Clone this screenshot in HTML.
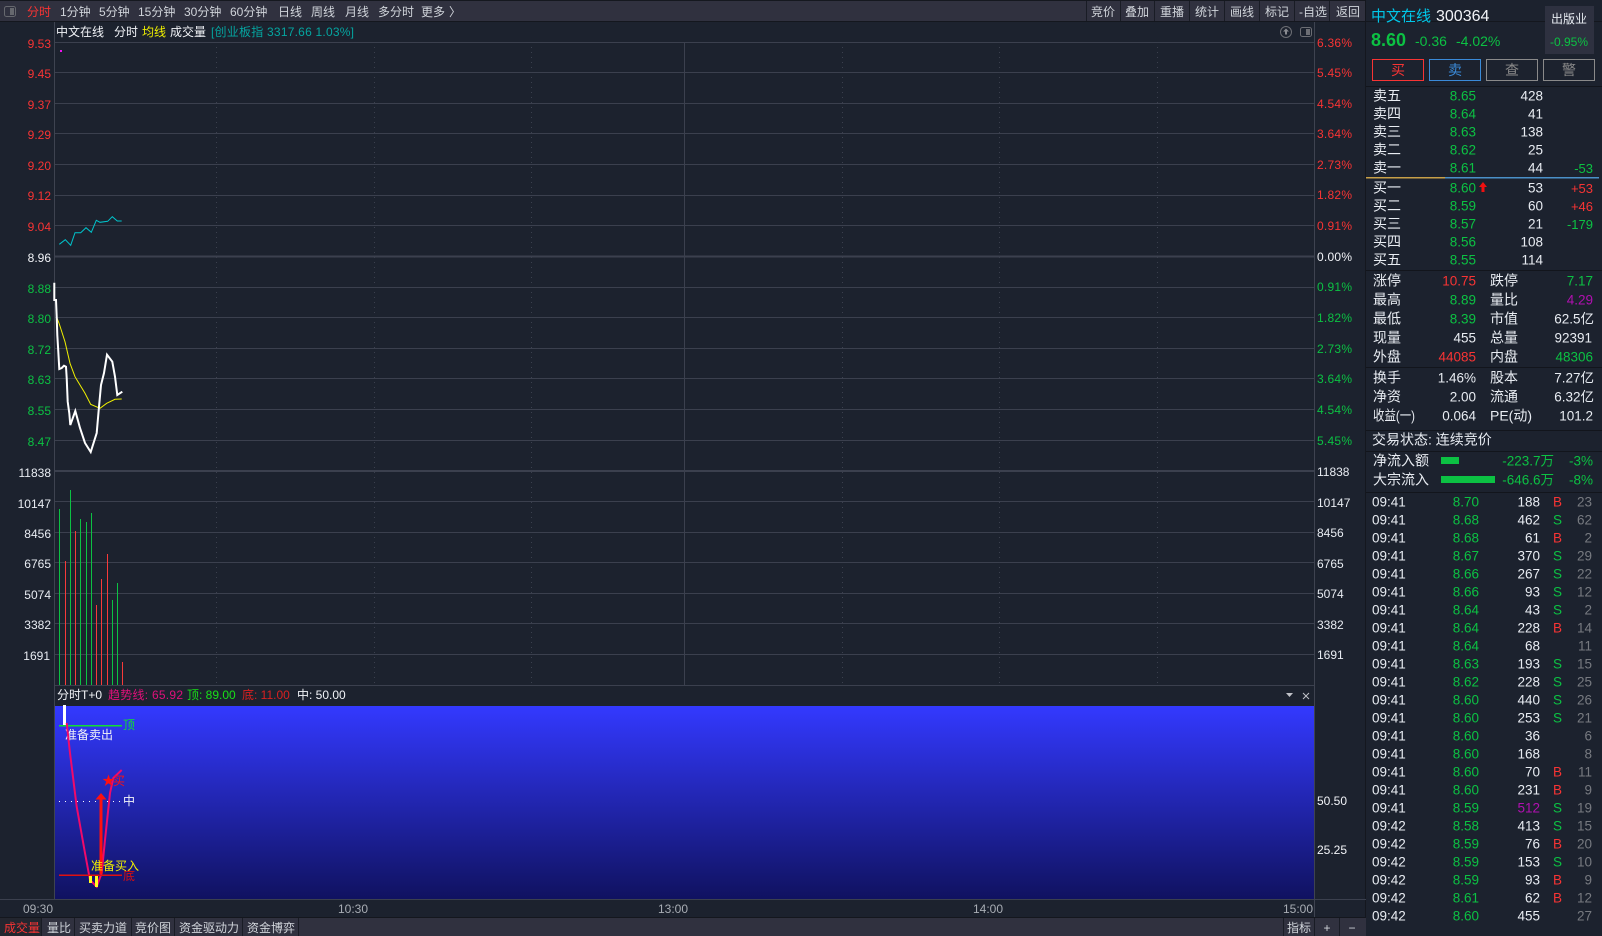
<!DOCTYPE html>
<html><head><meta charset="utf-8"><title>中文在线 300364</title>
<style>
html,body{margin:0;padding:0;background:#1c222e;width:1602px;height:936px;overflow:hidden}
svg{display:block}
text{font-family:"Liberation Sans","Noto Sans CJK SC",sans-serif;font-size:12px;fill:#e8ecf2}
.e{text-anchor:end}.m{text-anchor:middle}
.r{fill:#f83434}.g{fill:#0cc143}.w{fill:#f2f4f8}.y{fill:#f0f000}.p{fill:#b010b0}.d{fill:#777a80}.t{fill:#a8adb4}
.n text{font-size:13.5px}
.n text.l{font-size:14px}
.tb text{fill:#d0d4da}
.tb text.r{fill:#f83434}
.c{shape-rendering:crispEdges}
</style></head><body>
<svg width="1602" height="936" viewBox="0 0 1602 936" xmlns="http://www.w3.org/2000/svg">
<defs><linearGradient id="bl" x1="0" y1="0" x2="0" y2="1"><stop offset="0" stop-color="#3339ff"/><stop offset="1" stop-color="#101260"/></linearGradient></defs>
<rect width="1602" height="936" fill="#1c222e"/>

<!-- top toolbar -->
<g class="c">
<rect width="1366" height="22" fill="#30313f"/><rect y="0" width="1366" height="1" fill="#15181f"/><rect y="21" width="1602" height="1" fill="#14171e"/>
<rect x="1086" y="1" width="1" height="20" fill="#191c25"/><rect x="1120" y="1" width="1" height="20" fill="#191c25"/><rect x="1154" y="1" width="1" height="20" fill="#191c25"/><rect x="1189" y="1" width="1" height="20" fill="#191c25"/><rect x="1224" y="1" width="1" height="20" fill="#191c25"/><rect x="1259" y="1" width="1" height="20" fill="#191c25"/><rect x="1294" y="1" width="1" height="20" fill="#191c25"/><rect x="1329" y="1" width="1" height="20" fill="#191c25"/><rect x="1365" y="0" width="1" height="936" fill="#14171e"/>
</g>
<rect x="4.5" y="6.5" width="11" height="10" rx="2" fill="#30313f" stroke="#66686e"/><rect x="10" y="8" width="4" height="7" fill="#66686e"/>
<g class="tb">
<text x="27" y="16" class="r">分时</text><text x="60" y="16">1分钟</text><text x="99" y="16">5分钟</text><text x="138" y="16">15分钟</text><text x="184" y="16">30分钟</text><text x="230" y="16">60分钟</text><text x="278" y="16">日线</text><text x="311" y="16">周线</text><text x="345" y="16">月线</text><text x="378" y="16">多分时</text><text x="421" y="16">更多</text><text x="449" y="16">〉</text>
<text x="1091" y="16">竞价</text><text x="1125" y="16">叠加</text><text x="1160" y="16">重播</text><text x="1195" y="16">统计</text><text x="1230" y="16">画线</text><text x="1265" y="16">标记</text><text x="1299" y="16">-自选</text><text x="1336" y="16">返回</text>
</g>

<!-- chart legend -->
<text x="56" y="36" class="w">中文在线</text><text x="114" y="36" class="w">分时</text><text x="142" y="36" class="y">均线</text><text x="170" y="36" class="w">成交量</text><text x="211" y="36" style="fill:#05a5a0" textLength="143">[创业板指 3317.66 1.03%]</text>
<circle cx="1286" cy="32" r="5.5" fill="none" stroke="#6c6e74"/><path d="M1286 28.500l3 3h-2v3h-2v-3h-2z" fill="#8a8c92"/>
<rect x="1300.500" y="27.500" width="11" height="9" rx="2" fill="none" stroke="#6c6e74"/><rect x="1306" y="29" width="4" height="6" fill="#6c6e74"/>

<!-- grid -->
<g class="c" stroke="#3b404e" stroke-width="1">
<path d="M54 42.500H1314M54 72.500H1314M54 103.500H1314M54 133.500H1314M54 164.500H1314M54 195.500H1314M54 225.500H1314M54 287.500H1314M54 317.500H1314M54 348.500H1314M54 378.500H1314M54 409.500H1314M54 440.500H1314M54 501.500H1314M54 532.500H1314M54 562.500H1314M54 593.500H1314M54 623.500H1314M54 654.500H1314M54 685.500H1314M0 899.500H1366"/>
<path d="M54 256.500H1314M54 471H1314" stroke-width="2"/>
<path d="M216.500 42V685M374.500 42V685M531.500 42V685M842.500 42V685M999.500 42V685M1157.500 42V685" stroke-dasharray="1 4"/>
<path d="M684.500 42V685"/>
<path d="M54.500 22V899M1314.500 22V918" stroke="#3e4350"/>
</g>

<!-- left axis -->
<g class="e">
<text x="51" y="48" class="r">9.53</text><text x="51" y="78" class="r">9.45</text><text x="51" y="109" class="r">9.37</text><text x="51" y="139" class="r">9.29</text><text x="51" y="170" class="r">9.20</text><text x="51" y="200" class="r">9.12</text><text x="51" y="231" class="r">9.04</text><text x="51" y="262" class="w">8.96</text>
<text x="51" y="293" class="g">8.88</text><text x="51" y="323" class="g">8.80</text><text x="51" y="354" class="g">8.72</text><text x="51" y="384" class="g">8.63</text><text x="51" y="415" class="g">8.55</text><text x="51" y="446" class="g">8.47</text>
<text x="51" y="477">11838</text><text x="51" y="508">10147</text><text x="51" y="538">8456</text><text x="51" y="568">6765</text><text x="51" y="599">5074</text><text x="51" y="629">3382</text><text x="50" y="660">1691</text>
</g>
<!-- right axis -->
<text x="1317" y="47" class="r" textLength="35">6.36%</text><text x="1317" y="77" class="r" textLength="35">5.45%</text><text x="1317" y="108" class="r" textLength="35">4.54%</text><text x="1317" y="138" class="r" textLength="35">3.64%</text><text x="1317" y="169" class="r" textLength="35">2.73%</text><text x="1317" y="199" class="r" textLength="35">1.82%</text><text x="1317" y="230" class="r" textLength="35">0.91%</text><text x="1317" y="261" class="w" textLength="35">0.00%</text>
<text x="1317" y="291" class="g" textLength="35">0.91%</text><text x="1317" y="322" class="g" textLength="35">1.82%</text><text x="1317" y="353" class="g" textLength="35">2.73%</text><text x="1317" y="383" class="g" textLength="35">3.64%</text><text x="1317" y="414" class="g" textLength="35">4.54%</text><text x="1317" y="445" class="g" textLength="35">5.45%</text>
<text x="1317" y="476">11838</text><text x="1317" y="507">10147</text><text x="1317" y="537">8456</text><text x="1317" y="568">6765</text><text x="1317" y="598">5074</text><text x="1317" y="629">3382</text><text x="1317" y="659">1691</text>

<!-- price lines -->
<rect x="60" y="50" width="2" height="2" fill="#f010f0"/>
<polyline fill="none" stroke="#00c4cc" stroke-width="1" points="59.300,244.300 62.700,241.700 65.300,239.700 70.700,245.300 75,232.700 80.700,232.700 86,227.700 91.300,232.300 96.300,220.300 100,222.300 107.700,221.300 112.300,216.700 117.300,221 121.700,221"/>
<polyline fill="none" stroke="#f0f000" stroke-width="1" points="57,318 59.300,324 65,341.700 70,363.300 75,376.700 80,385 85,393.300 90.700,404.300 100,408.300 106.700,403.300 115,399.300 121.700,399"/>
<polyline fill="none" stroke="#ffffff" stroke-width="2" points="54.300,282.700 54.300,300 56,300 56.700,316.700 57.300,335 58.300,351.700 59.300,369 61.700,368 64,365.700 66,366.700 66.700,378 67.700,401.700 69.300,413.300 70.300,425 75.300,411 80,428 85,443 90.700,452 96.700,433 99,406.700 101,385 104,373 107,354.700 112.300,361.700 115,376.700 117.300,395 122.300,391.700"/>

<!-- volume -->
<g class="c" stroke-width="1">
<path stroke="#0cc143" d="M59.500 509V685M70.500 490V685M80.500 519V685M86.500 522V685M91.500 513V685M112.500 600V685M117.500 583V685"/>
<path stroke="#f83a3a" d="M65.500 561V685M75.500 531V685M96.500 605V685M101.500 579V685M107.500 554V685M122.500 662V685"/>
</g>

<!-- sub panel -->
<text x="57" y="699" class="w">分时T+0</text><text x="108" y="699" style="fill:#e0107a" textLength="75">趋势线: 65.92</text><text x="187" y="699" style="fill:#18e018">顶: 89.00</text><text x="242" y="699" style="fill:#d82020">底: 11.00</text><text x="297" y="699" class="w">中: 50.00</text>
<path d="M1286 693h7l-3.500 4z" fill="#c0c2c8"/><path d="M1303 693l6 6M1309 693l-6 6" stroke="#c0c2c8" stroke-width="1" fill="none"/>
<rect x="55" y="706" width="1259" height="193" fill="url(#bl)"/>
<rect x="63" y="705" width="3" height="21" fill="#fff"/>
<rect x="59" y="725" width="63" height="1.500" fill="#10e030"/>
<text x="123" y="729" style="fill:#10e030">顶</text>
<text x="65" y="739" class="w">准备卖出</text>
<polyline fill="none" stroke="#f00a6a" stroke-width="2" points="66.700,723 70,753 76.700,806.700 85,853 90,880 96.700,886.700 101.700,873 105,840 110,793 113.300,778 121.700,770"/>
<path d="M59 801.500H124" stroke="#fff" stroke-width="1" stroke-dasharray="1 5" fill="none"/>
<text x="123" y="805" class="w">中</text>
<rect x="99.500" y="798" width="3" height="76" fill="#ff1010"/><path d="M101 793l5.500 6.500h-11z" fill="#ff1010"/>
<text x="102" y="785" style="fill:#ff1010;font-size:13px">★</text><text x="113" y="785" style="fill:#ff1010">买</text>
<rect x="59" y="874.500" width="63" height="1.500" fill="#e01010"/>
<text x="123" y="880" style="fill:#d81010">底</text>
<rect x="89" y="876" width="3" height="7" fill="#ffff20"/><rect x="95" y="876" width="3" height="11" fill="#ffff20"/>
<text x="91" y="870" class="y">准备买入</text>
<text x="1317" y="805" class="w">50.50</text><text x="1317" y="854" class="w">25.25</text>

<!-- time axis -->
<text x="38" y="913" class="m t">09:30</text><text x="353" y="913" class="m t">10:30</text><text x="673" y="913" class="m t">13:00</text><text x="988" y="913" class="m t">14:00</text><text x="1313" y="913" class="e t">15:00</text>

<!-- bottom tabs -->
<g class="c">
<rect y="918" width="1366" height="18" fill="#30313f"/><rect y="917" width="1366" height="1" fill="#14171e"/>
<rect y="918" width="41" height="18" fill="#23262f"/>
<rect x="41" y="918" width="1" height="18" fill="#191c25"/><rect x="74" y="918" width="1" height="18" fill="#191c25"/><rect x="131" y="918" width="1" height="18" fill="#191c25"/><rect x="174" y="918" width="1" height="18" fill="#191c25"/><rect x="242" y="918" width="1" height="18" fill="#191c25"/><rect x="298" y="918" width="1" height="18" fill="#191c25"/><rect x="1283" y="918" width="1" height="18" fill="#191c25"/><rect x="1314" y="918" width="1" height="18" fill="#191c25"/><rect x="1339" y="918" width="1" height="18" fill="#191c25"/>
</g>
<g class="tb">
<text x="4" y="932" class="r">成交量</text><text x="47" y="932">量比</text><text x="79" y="932">买卖力道</text><text x="135" y="932">竞价图</text><text x="179" y="932">资金驱动力</text><text x="247" y="932">资金博弈</text><text x="1287" y="932">指标</text><text x="1327" y="932" class="m">+</text><text x="1352" y="932" class="m">−</text>
</g>

<!-- right panel header -->
<text x="1371" y="21" style="fill:#00c8ea;font-size:15px">中文在线</text><text x="1436" y="21" style="font-size:16px" class="w">300364</text>
<text x="1371" y="46" class="g" style="font-size:18px;font-weight:bold">8.60</text><text x="1415" y="46" class="g" style="font-size:14px">-0.36</text><text x="1456" y="46" class="g" style="font-size:14px">-4.02%</text>
<rect x="1545" y="6" width="49" height="48" fill="#2e3140"/>
<text x="1569" y="23" class="m">出版业</text><text x="1569" y="46" class="m g">-0.95%</text>
<g fill="none" class="c">
<rect x="1372.500" y="59.500" width="51" height="21" stroke="#f83434"/><rect x="1429.500" y="59.500" width="51" height="21" stroke="#3a8ad8"/><rect x="1486.500" y="59.500" width="51" height="21" stroke="#8a8a8a"/><rect x="1543.500" y="59.500" width="51" height="21" stroke="#8a8a8a"/>
</g>
<text x="1398" y="75" class="m r" style="font-size:14px">买</text><text x="1455" y="75" class="m" style="font-size:14px;fill:#3a8ad8">卖</text><text x="1512" y="75" class="m" style="font-size:14px;fill:#8a8a8a">查</text><text x="1569" y="75" class="m" style="font-size:14px;fill:#8a8a8a">警</text>

<!-- separators -->
<g class="c">
<rect x="1366" y="86" width="236" height="1" fill="#12151c"/>
<rect x="1366" y="177" width="79" height="1.500" fill="#c8a048"/><rect x="1445" y="177" width="154" height="1.500" fill="#4a90c8"/>
<rect x="1366" y="270" width="236" height="1" fill="#12151c"/><rect x="1366" y="367" width="236" height="1" fill="#12151c"/><rect x="1366" y="430" width="236" height="1" fill="#12151c"/><rect x="1366" y="451" width="236" height="1" fill="#12151c"/><rect x="1366" y="492" width="236" height="1" fill="#12151c"/>
</g>

<g class="n" transform="translate(0,-0.5)">
<!-- order book -->
<text x="1373" y="101" class="l">卖五</text><text x="1476" y="101" class="e g">8.65</text><text x="1543" y="101" class="e">428</text>
<text x="1373" y="119" class="l">卖四</text><text x="1476" y="119" class="e g">8.64</text><text x="1543" y="119" class="e">41</text>
<text x="1373" y="137" class="l">卖三</text><text x="1476" y="137" class="e g">8.63</text><text x="1543" y="137" class="e">138</text>
<text x="1373" y="155" class="l">卖二</text><text x="1476" y="155" class="e g">8.62</text><text x="1543" y="155" class="e">25</text>
<text x="1373" y="173" class="l">卖一</text><text x="1476" y="173" class="e g">8.61</text><text x="1543" y="173" class="e">44</text>
<text x="1373" y="193" class="l">买一</text><text x="1476" y="193" class="e g">8.60</text><text x="1543" y="193" class="e">53</text>
<text x="1373" y="211" class="l">买二</text><text x="1476" y="211" class="e g">8.59</text><text x="1543" y="211" class="e">60</text>
<text x="1373" y="229" class="l">买三</text><text x="1476" y="229" class="e g">8.57</text><text x="1543" y="229" class="e">21</text>
<text x="1373" y="247" class="l">买四</text><text x="1476" y="247" class="e g">8.56</text><text x="1543" y="247" class="e">108</text>
<text x="1373" y="265" class="l">买五</text><text x="1476" y="265" class="e g">8.55</text><text x="1543" y="265" class="e">114</text>

<!-- stats -->
<text x="1373" y="286" class="l">涨停</text><text x="1476" y="286" class="e r">10.75</text><text x="1490" y="286" class="l">跌停</text><text x="1593" y="286" class="e g">7.17</text>
<text x="1373" y="305" class="l">最高</text><text x="1476" y="305" class="e g">8.89</text><text x="1490" y="305" class="l">量比</text><text x="1593" y="305" class="e p">4.29</text>
<text x="1373" y="324" class="l">最低</text><text x="1476" y="324" class="e g">8.39</text><text x="1490" y="324" class="l">市值</text><text x="1594" y="324" class="e">62.5亿</text>
<text x="1373" y="343" class="l">现量</text><text x="1476" y="343" class="e">455</text><text x="1490" y="343" class="l">总量</text><text x="1592" y="343" class="e">92391</text>
<text x="1373" y="362" class="l">外盘</text><text x="1476" y="362" class="e r">44085</text><text x="1490" y="362" class="l">内盘</text><text x="1593" y="362" class="e g">48306</text>
<text x="1373" y="383" class="l">换手</text><text x="1476" y="383" class="e">1.46%</text><text x="1490" y="383" class="l">股本</text><text x="1594" y="383" class="e">7.27亿</text>
<text x="1373" y="402" class="l">净资</text><text x="1476" y="402" class="e">2.00</text><text x="1490" y="402" class="l">流通</text><text x="1594" y="402" class="e">6.32亿</text>
<text x="1373" y="421" class="l" textLength="42" lengthAdjust="spacingAndGlyphs">收益(一)</text><text x="1476" y="421" class="e">0.064</text><text x="1490" y="421" class="l">PE(动)</text><text x="1593" y="421" class="e">101.2</text>
<text x="1372" y="445" class="l">交易状态: 连续竞价</text>
<text x="1373" y="466" class="l">净流入额</text><text x="1554" y="466" class="e g">-223.7万</text><text x="1593" y="466" class="e g">-3%</text>
<text x="1373" y="485" class="l">大宗流入</text><text x="1554" y="485" class="e g">-646.6万</text><text x="1593" y="485" class="e g">-8%</text>

<!-- trades -->
<text x="1372" y="507">09:41</text><text x="1479" y="507" class="e g">8.70</text><text x="1540" y="507" class="e">188</text><text x="1553" y="507" class="r">B</text><text x="1592" y="507" class="e d">23</text>
<text x="1372" y="525">09:41</text><text x="1479" y="525" class="e g">8.68</text><text x="1540" y="525" class="e">462</text><text x="1553" y="525" class="g">S</text><text x="1592" y="525" class="e d">62</text>
<text x="1372" y="543">09:41</text><text x="1479" y="543" class="e g">8.68</text><text x="1540" y="543" class="e">61</text><text x="1553" y="543" class="r">B</text><text x="1592" y="543" class="e d">2</text>
<text x="1372" y="561">09:41</text><text x="1479" y="561" class="e g">8.67</text><text x="1540" y="561" class="e">370</text><text x="1553" y="561" class="g">S</text><text x="1592" y="561" class="e d">29</text>
<text x="1372" y="579">09:41</text><text x="1479" y="579" class="e g">8.66</text><text x="1540" y="579" class="e">267</text><text x="1553" y="579" class="g">S</text><text x="1592" y="579" class="e d">22</text>
<text x="1372" y="597">09:41</text><text x="1479" y="597" class="e g">8.66</text><text x="1540" y="597" class="e">93</text><text x="1553" y="597" class="g">S</text><text x="1592" y="597" class="e d">12</text>
<text x="1372" y="615">09:41</text><text x="1479" y="615" class="e g">8.64</text><text x="1540" y="615" class="e">43</text><text x="1553" y="615" class="g">S</text><text x="1592" y="615" class="e d">2</text>
<text x="1372" y="633">09:41</text><text x="1479" y="633" class="e g">8.64</text><text x="1540" y="633" class="e">228</text><text x="1553" y="633" class="r">B</text><text x="1592" y="633" class="e d">14</text>
<text x="1372" y="651">09:41</text><text x="1479" y="651" class="e g">8.64</text><text x="1540" y="651" class="e">68</text><text x="1592" y="651" class="e d">11</text>
<text x="1372" y="669">09:41</text><text x="1479" y="669" class="e g">8.63</text><text x="1540" y="669" class="e">193</text><text x="1553" y="669" class="g">S</text><text x="1592" y="669" class="e d">15</text>
<text x="1372" y="687">09:41</text><text x="1479" y="687" class="e g">8.62</text><text x="1540" y="687" class="e">228</text><text x="1553" y="687" class="g">S</text><text x="1592" y="687" class="e d">25</text>
<text x="1372" y="705">09:41</text><text x="1479" y="705" class="e g">8.60</text><text x="1540" y="705" class="e">440</text><text x="1553" y="705" class="g">S</text><text x="1592" y="705" class="e d">26</text>
<text x="1372" y="723">09:41</text><text x="1479" y="723" class="e g">8.60</text><text x="1540" y="723" class="e">253</text><text x="1553" y="723" class="g">S</text><text x="1592" y="723" class="e d">21</text>
<text x="1372" y="741">09:41</text><text x="1479" y="741" class="e g">8.60</text><text x="1540" y="741" class="e">36</text><text x="1592" y="741" class="e d">6</text>
<text x="1372" y="759">09:41</text><text x="1479" y="759" class="e g">8.60</text><text x="1540" y="759" class="e">168</text><text x="1592" y="759" class="e d">8</text>
<text x="1372" y="777">09:41</text><text x="1479" y="777" class="e g">8.60</text><text x="1540" y="777" class="e">70</text><text x="1553" y="777" class="r">B</text><text x="1592" y="777" class="e d">11</text>
<text x="1372" y="795">09:41</text><text x="1479" y="795" class="e g">8.60</text><text x="1540" y="795" class="e">231</text><text x="1553" y="795" class="r">B</text><text x="1592" y="795" class="e d">9</text>
<text x="1372" y="813">09:41</text><text x="1479" y="813" class="e g">8.59</text><text x="1540" y="813" class="e p">512</text><text x="1553" y="813" class="g">S</text><text x="1592" y="813" class="e d">19</text>
<text x="1372" y="831">09:42</text><text x="1479" y="831" class="e g">8.58</text><text x="1540" y="831" class="e">413</text><text x="1553" y="831" class="g">S</text><text x="1592" y="831" class="e d">15</text>
<text x="1372" y="849">09:42</text><text x="1479" y="849" class="e g">8.59</text><text x="1540" y="849" class="e">76</text><text x="1553" y="849" class="r">B</text><text x="1592" y="849" class="e d">20</text>
<text x="1372" y="867">09:42</text><text x="1479" y="867" class="e g">8.59</text><text x="1540" y="867" class="e">153</text><text x="1553" y="867" class="g">S</text><text x="1592" y="867" class="e d">10</text>
<text x="1372" y="885">09:42</text><text x="1479" y="885" class="e g">8.59</text><text x="1540" y="885" class="e">93</text><text x="1553" y="885" class="r">B</text><text x="1592" y="885" class="e d">9</text>
<text x="1372" y="903">09:42</text><text x="1479" y="903" class="e g">8.61</text><text x="1540" y="903" class="e">62</text><text x="1553" y="903" class="r">B</text><text x="1592" y="903" class="e d">12</text>
<text x="1372" y="921">09:42</text><text x="1479" y="921" class="e g">8.60</text><text x="1540" y="921" class="e">455</text><text x="1592" y="921" class="e d">27</text>
</g>
<g>
<text x="1593" y="173" class="e g" style="font-size:13px">-53</text><text x="1593" y="193" class="e r" style="font-size:13px">+53</text><text x="1593" y="211" class="e r" style="font-size:13px">+46</text><text x="1593" y="229" class="e g" style="font-size:13px">-179</text>
</g>
<path d="M1483 182l4 5h-2.500v5h-3v-5h-2.500z" fill="#f01010"/>
<rect x="1441" y="457" width="18" height="7" fill="#0cc143" class="c"/><rect x="1441" y="476" width="54" height="7" fill="#0cc143" class="c"/>
</svg>
</body></html>
